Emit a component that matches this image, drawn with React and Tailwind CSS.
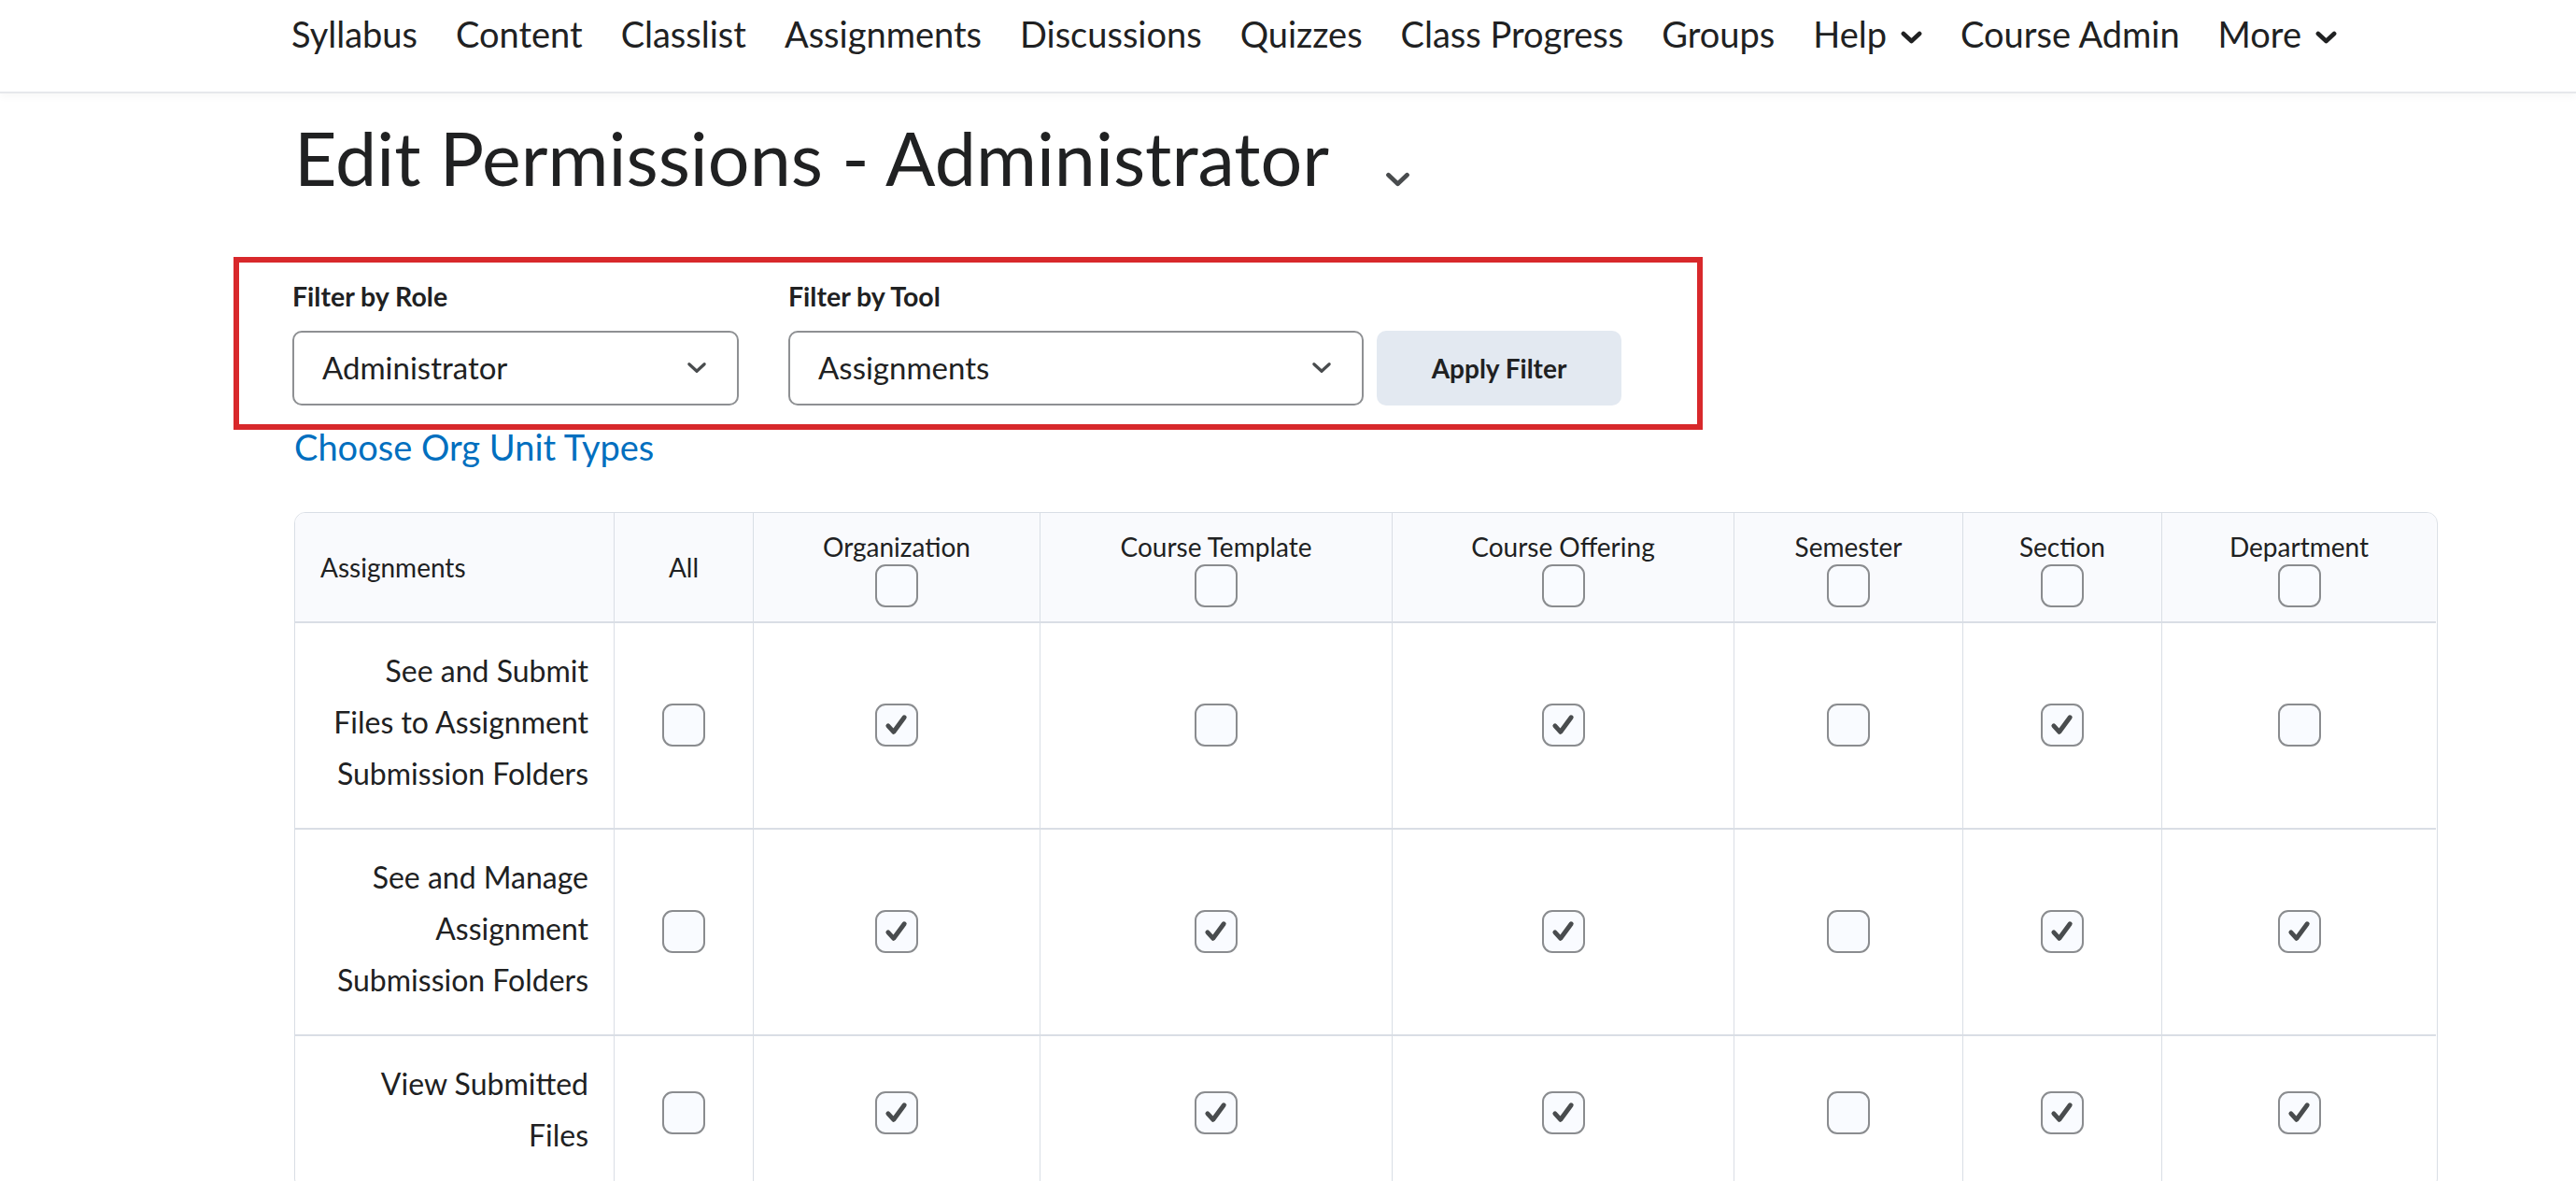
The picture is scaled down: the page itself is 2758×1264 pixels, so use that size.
import React from "react";

const navItems = [
  { label: "Syllabus" },
  { label: "Content" },
  { label: "Classlist" },
  { label: "Assignments" },
  { label: "Discussions" },
  { label: "Quizzes" },
  { label: "Class Progress" },
  { label: "Groups" },
  { label: "Help", chevron: true },
  { label: "Course Admin" },
  { label: "More", chevron: true },
];

const columns = ["Organization", "Course Template", "Course Offering", "Semester", "Section", "Department"];

const rows = [
  { lines: ["See and Submit", "Files to Assignment", "Submission Folders"], checks: [false, true, false, true, false, true, false] },
  { lines: ["See and Manage", "Assignment", "Submission Folders"], checks: [false, true, true, true, false, true, true] },
  { lines: ["View Submitted", "Files"], checks: [false, true, true, true, false, true, true] },
];

function Chevron({ w = 20, h = 12, sw = 3, className = "" }) {
  return (
    <svg width={w} height={h} viewBox="0 0 20 12" className={className}>
      <path d="M2.5 2.5 L10 9.5 L17.5 2.5" fill="none" stroke="currentColor" strokeWidth={sw} strokeLinecap="round" strokeLinejoin="round" />
    </svg>
  );
}

function Checkbox({ checked }) {
  return (
    <div className="w-[46px] h-[46px] rounded-[11px] border-2 border-[#8a8c8f] bg-[#f9fbff] flex items-center justify-center">
      {checked && (
        <svg width="46" height="46" viewBox="0 0 46 46">
          <path d="M13 24 L19.5 31 L32 14" fill="none" stroke="#494c4e" strokeWidth="5.4" strokeLinecap="round" strokeLinejoin="round" />
        </svg>
      )}
    </div>
  );
}

export default function App() {
  return (
    <div className="w-[2758px] h-[1264px] overflow-hidden bg-white font-['Lato','Noto_Sans',sans-serif] text-[#202122]">
      <nav className="h-[100px] border-b-2 border-[#e6e8eb] shadow-[0_4px_8px_rgba(0,0,0,0.03)] flex items-start pl-[312px] pt-[14px] gap-[41px] text-[38px] leading-[1.2]">
        {navItems.map((n) => (
          <div key={n.label} className="flex items-center gap-[15px] whitespace-nowrap">
            <span>{n.label}</span>
            {n.chevron && <Chevron w={23} h={14} sw={4} className="text-[#202122] mt-[6px]" />}
          </div>
        ))}
      </nav>

      <div className="pl-[315px]">
        <div className="mt-[22px] flex items-center">
          <h1 className="text-[79px] leading-[1.2] font-normal whitespace-nowrap">Edit Permissions - Administrator</h1>
          <Chevron w={27} h={16} sw={3.6} className="text-[#494c4e] ml-[60px] mt-[46px]" />
        </div>

        <div className="mt-[58px] -ml-[65px] w-[1573px] border-[6px] border-[#d8282b] pt-[19px] pb-[20px] pl-[57px] flex items-end">
          <div className="w-[478px] flex flex-col">
            <label className="text-[28.5px] leading-[1.2] font-bold">Filter by Role</label>
            <div className="mt-[20px] h-[80px] rounded-[10px] border-2 border-[#8e9093] flex items-center justify-between pl-[30px] pr-[32px]">
              <span className="text-[33px]">Administrator</span>
              <Chevron w={22} h={13} sw={3} className="text-[#494c4e]" />
            </div>
          </div>
          <div className="ml-[53px] w-[616px] flex flex-col">
            <label className="text-[28.5px] leading-[1.2] font-bold">Filter by Tool</label>
            <div className="mt-[20px] h-[80px] rounded-[10px] border-2 border-[#8e9093] flex items-center justify-between pl-[30px] pr-[32px]">
              <span className="text-[33px]">Assignments</span>
              <Chevron w={22} h={13} sw={3} className="text-[#494c4e]" />
            </div>
          </div>
          <button className="ml-[14px] w-[262px] h-[80px] rounded-[10px] bg-[#e3e9f1] text-[28px] font-bold">Apply Filter</button>
        </div>

        <div className="-mt-[4px] text-[38px] leading-[1.2] text-[#006fbf]">Choose Org Unit Types</div>

        <div className="mt-[46px] w-[2295px] border border-[#d9dee5] rounded-[12px] overflow-hidden">
          <div className="grid grid-cols-[341px_149px_307px_377px_366px_245px_213px_294px]">
            <div className="h-[116px] bg-[#f9fafd] flex items-center pl-[27px] text-[28px]">Assignments</div>
            <div className="h-[116px] bg-[#f9fafd] border-l border-[#d9dee5] flex items-center justify-center text-[28px]">All</div>
            {columns.map((c) => (
              <div key={c} className="h-[116px] bg-[#f9fafd] border-l border-[#d9dee5] flex flex-col items-center justify-center pt-[6px] text-[28px]">
                <span className="leading-[33px]">{c}</span>
                <div className="mt-[2px]">
                  <Checkbox checked={false} />
                </div>
              </div>
            ))}
            {rows.map((r, ri) => (
              <React.Fragment key={ri}>
                <div className="border-t-2 border-[#d9dee5] pt-[23px] pb-[31px] pr-[27px] text-right text-[32px] leading-[55px]">
                  {r.lines.map((l) => (
                    <div key={l}>{l}</div>
                  ))}
                </div>
                {r.checks.map((c, ci) => (
                  <div key={ci} className="border-t-2 border-l border-[#d9dee5] flex items-center justify-center">
                    <Checkbox checked={c} />
                  </div>
                ))}
              </React.Fragment>
            ))}
          </div>
        </div>
      </div>
    </div>
  );
}
